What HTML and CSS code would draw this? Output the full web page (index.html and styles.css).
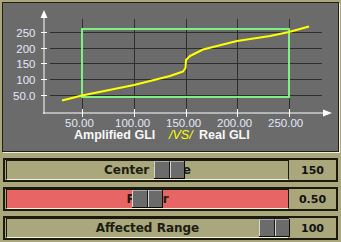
FILE: index.html
```html
<!DOCTYPE html>
<html lang="en">
<head>
    <meta charset="UTF-8">
    <title>GLI Amplifier</title>
    <link rel="stylesheet" href="styles.css">
</head>
<body>

    <div class="chart-panel">
        <svg class="chart" width="335" height="148" viewBox="3 3 335 148">
            <!-- grid -->
            <g class="grid">
                <line x1="50" y1="32.5" x2="322" y2="32.5"/>
                <line x1="50" y1="48.5" x2="322" y2="48.5"/>
                <line x1="50" y1="63.5" x2="322" y2="63.5"/>
                <line x1="50" y1="79.5" x2="322" y2="79.5"/>
                <line x1="50" y1="95.5" x2="322" y2="95.5"/>
                <line x1="82.5" y1="19" x2="82.5" y2="112"/>
                <line x1="134.5" y1="19" x2="134.5" y2="112"/>
                <line x1="186.5" y1="19" x2="186.5" y2="112"/>
                <line x1="237.5" y1="19" x2="237.5" y2="112"/>
                <line x1="289.5" y1="19" x2="289.5" y2="112"/>
            </g>

            <!-- axes -->
            <g class="axis">
                <line x1="44" y1="16" x2="44" y2="114" stroke-width="2"/>
                <line x1="43" y1="113" x2="324" y2="113" stroke-width="2"/>
                <line x1="41" y1="32.5" x2="47" y2="32.5"/>
                <line x1="41" y1="48.5" x2="47" y2="48.5"/>
                <line x1="41" y1="63.5" x2="47" y2="63.5"/>
                <line x1="41" y1="79.5" x2="47" y2="79.5"/>
                <line x1="41" y1="95.5" x2="47" y2="95.5"/>
                <line x1="82.5" y1="109" x2="82.5" y2="117"/>
                <line x1="134.5" y1="109" x2="134.5" y2="117"/>
                <line x1="186.5" y1="109" x2="186.5" y2="117"/>
                <line x1="237.5" y1="109" x2="237.5" y2="117"/>
                <line x1="289.5" y1="109" x2="289.5" y2="117"/>
            </g>
            <polygon class="arrow" points="44,10 40.5,18 47.5,18"/>
            <polygon class="arrow" points="332,113 323,109.5 323,116.5"/>

            <!-- selected range -->
            <rect class="range" x="82" y="29" width="207" height="68"/>

            <!-- transfer curve -->
            <polyline class="curve" points="62,100.5 82,95.5 134,85 170,76 183,71.5 185.5,68 186,60 190,56 203,49.5 237,41 270,36 289,32 309,26.5"/>

            <g class="ylabels">
                <text x="35.5" y="36.5">250</text>
                <text x="35.5" y="52.5">200</text>
                <text x="35.5" y="67.5">150</text>
                <text x="35.5" y="83.5">100</text>
                <text x="35.5" y="99.5">50.0</text>
            </g>
            <g class="xlabels">
                <text x="65" y="127">50.00</text>
                <text x="115" y="127">100.00</text>
                <text x="166" y="127">150.00</text>
                <text x="217" y="127">200.00</text>
                <text x="268" y="127">250.00</text>
            </g>

            <text class="title" x="74" y="139">Amplified GLI</text>
            <text class="title vs" x="169" y="139">/VS/</text>
            <text class="title" x="199" y="139">Real GLI</text>
        </svg>
    </div>

    <div class="sliders">
        <div class="slider">
            <div class="track">
                <span class="label">Center Value</span>
                <div class="thumb" style="left: 147px"><span></span><span></span></div>
            </div>
            <div class="value">150</div>
        </div>
        <div class="slider">
            <div class="track track-red">
                <span class="label">Power</span>
                <div class="thumb" style="left: 125px"><span></span><span></span></div>
            </div>
            <div class="value">0.50</div>
        </div>
        <div class="slider">
            <div class="track">
                <span class="label">Affected Range</span>
                <div class="thumb" style="left: 252px"><span></span><span></span></div>
            </div>
            <div class="value">100</div>
        </div>
    </div>

</body>
</html>
```

FILE: styles.css
```css
body {
    margin: 0;
    padding: 0;
    width: 341px;
    height: 242px;
    background: #a9a77b;
    font-family: "DejaVu Sans", sans-serif;
    overflow: hidden;
}

.chart-panel {
    box-sizing: border-box;
    width: 337px;
    height: 150px;
    margin: 2px 2px 0 2px;
    border: 1px solid #1e1e12;
    background: #6b6b6b;
    box-shadow: 1px 1px 0 #f2f0d6;
}
.chart { display: block; }

.grid line { stroke: #2e2e2e; stroke-width: 1; }
.axis line { stroke: #ffffff; stroke-width: 1; }
.arrow { fill: #ffffff; }
.range { fill: none; stroke: #80f080; stroke-width: 2; }
.curve { fill: none; stroke: #ffff00; stroke-width: 2; stroke-linejoin: round; }

.ylabels text, .xlabels text {
    font-family: "Liberation Sans", Arial, sans-serif;
    font-size: 11.5px;
    fill: #e2e8fa;
}
.ylabels text { text-anchor: end; }

.title {
    font-family: "Liberation Sans", Arial, sans-serif;
    font-size: 12.5px;
    font-weight: bold;
    fill: #f8f8f8;
}
.title.vs { fill: #ffff00; font-style: italic; font-weight: normal; }

.sliders {
    display: flex;
    flex-direction: column;
    gap: 5px;
    margin: 6px 0 0 3px;
}

.slider {
    display: flex;
    box-sizing: border-box;
    width: 335px;
    height: 24px;
    padding-left: 1px;
    border: 2px solid #1a1a0e;
    background: #a9a77b;
}

.track {
    position: relative;
    width: 283px;
    box-sizing: border-box;
    border-top: 1px solid #1a1a0e;
    border-left: 1px solid #1a1a0e;
    border-right: 1px solid #1a1a0e;
    border-bottom: 1px solid #f4f2d8;
    display: flex;
    align-items: center;
    justify-content: center;
}
.track-red { background: #e86565; }

.label {
    font-size: 12px;
    font-weight: bold;
    color: #1c1c12;
}

.thumb {
    position: absolute;
    top: 0;
    width: 31px;
    height: 18px;
    box-sizing: border-box;
    display: flex;
    border-right: 1px solid #0c0c0c;
    border-bottom: 1px solid #0c0c0c;
}
.thumb span {
    flex: 1;
    background: #6b6b6b;
    border-top: 1px solid #a8a8a8;
    border-left: 1px solid #d4d4d4;
}
.thumb span:first-child { border-right: 1px solid #1a1a1a; }

.value {
    flex: 1;
    display: flex;
    align-items: center;
    justify-content: center;
    font-size: 11px;
    font-weight: bold;
    color: #121212;
}
```
